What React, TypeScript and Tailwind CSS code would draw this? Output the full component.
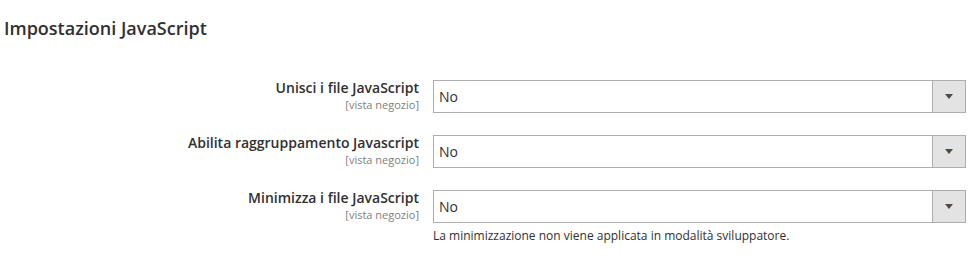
import React from 'react';

interface FieldProps {
  label: string;
  scope: string;
  value: string;
  note?: string;
}

const SelectBox: React.FC<{ value: string }> = ({ value }) => (
  <div className="flex h-[33px] w-[533px] border border-[#adadad] bg-white">
    <div className="flex flex-1 items-center pl-[5px] text-[14px] text-[#303030]">{value}</div>
    <div className="flex w-[33px] items-center justify-center border-l border-[#adadad] bg-[#e3e3e3]">
      <div className="h-0 w-0 border-x-[4px] border-t-[5px] border-x-transparent border-t-[#514943]" />
    </div>
  </div>
);

function Field({ label, scope, value, note }: FieldProps) {
  return (
    <div className="flex items-start">
      <div className="-mt-[2px] w-[419px] text-right">
        <div className="text-[14px] font-semibold leading-[19px] text-[#303030]">{label}</div>
        <div className="text-[11px] leading-[15px] text-[#808080]">{scope}</div>
      </div>
      <div className="ml-[14px]">
        <SelectBox value={value} />
        {note && <div className="mt-[5px] text-[12px] leading-[16px] text-[#303030]">{note}</div>}
      </div>
    </div>
  );
}

export default function App() {
  return (
    <div className="h-[271px] w-[972px] bg-white font-['Open_Sans',sans-serif]">
      <h2 className="pl-[4px] pt-[16px] text-[18px] font-semibold leading-[24px] text-[#303030]">Impostazioni JavaScript</h2>
      <div className="mt-[40px] flex flex-col gap-[22px]">
        <Field label="Unisci i file JavaScript" scope="[vista negozio]" value="No" />
        <Field label="Abilita raggruppamento Javascript" scope="[vista negozio]" value="No" />
        <Field
          label="Minimizza i file JavaScript"
          scope="[vista negozio]"
          value="No"
          note="La minimizzazione non viene applicata in modalità sviluppatore."
        />
      </div>
    </div>
  );
}
